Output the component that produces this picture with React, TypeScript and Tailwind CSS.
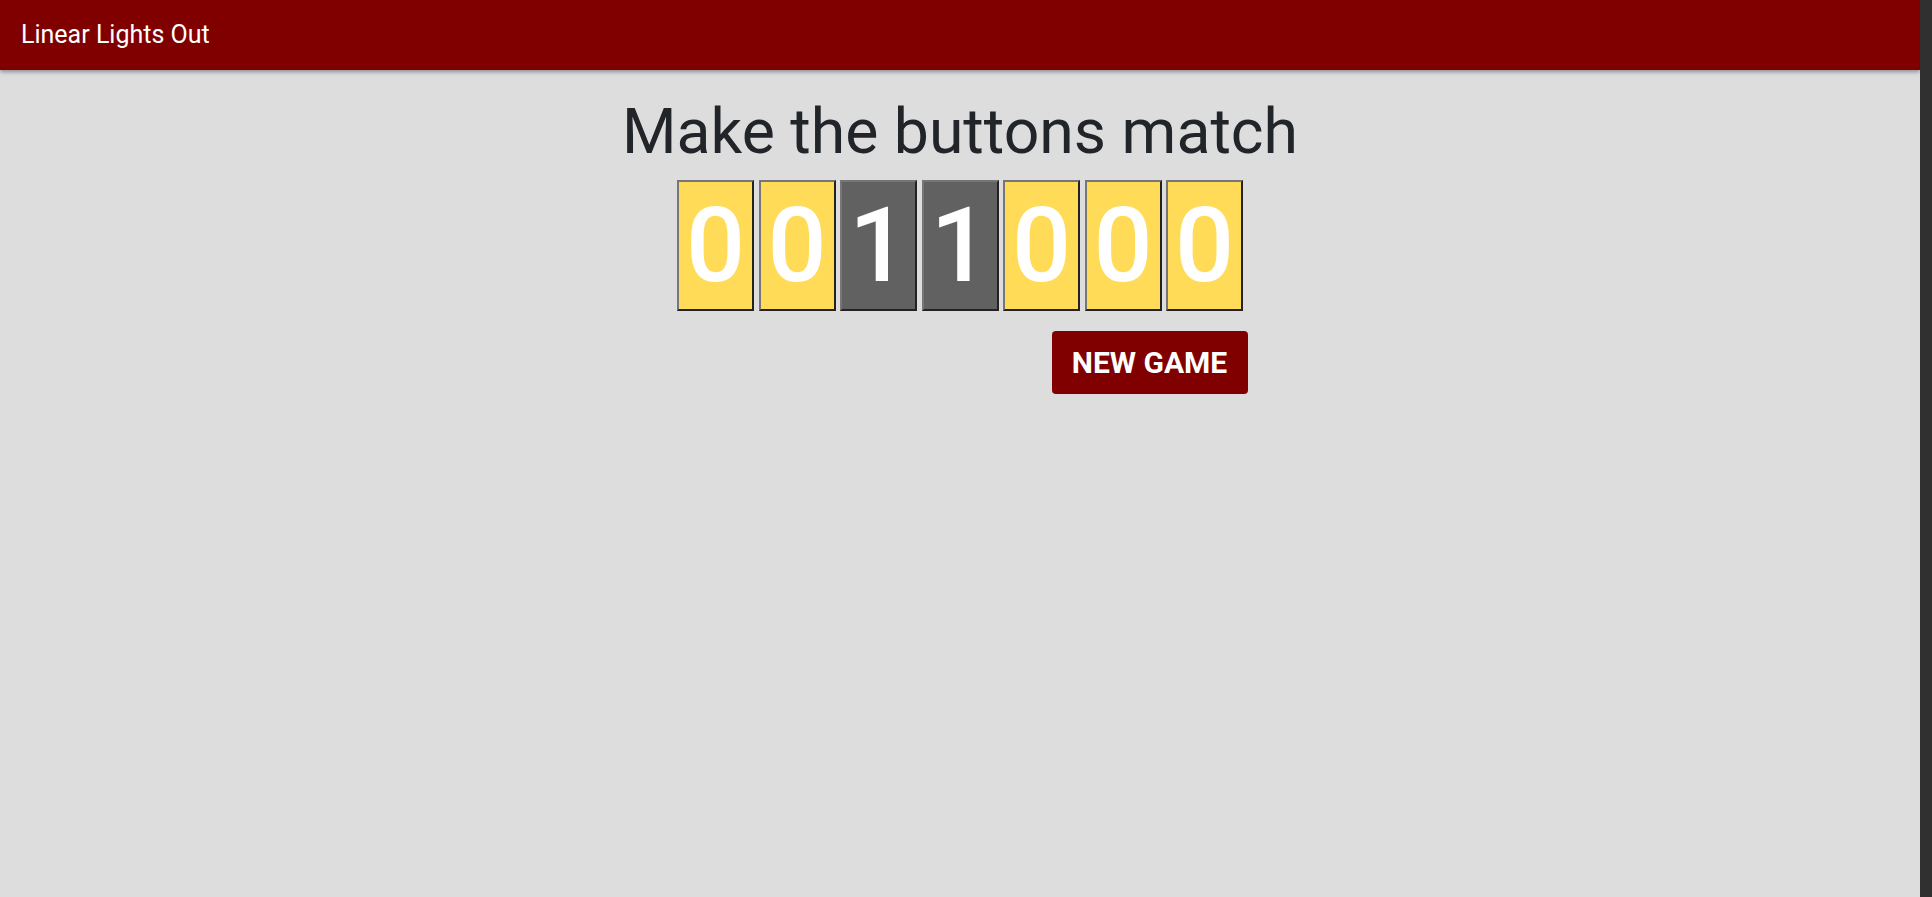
const lights = [0, 0, 1, 1, 0, 0, 0];

function Light({ on }: { on: boolean }) {
  return (
    <button
      className={`flex h-[131px] w-[77px] items-center justify-center border-2 border-t-[#767676] border-l-[#767676] border-b-[#222] border-r-[#222] text-[104px] font-medium leading-none text-white ${
        on ? "bg-[#616161]" : "bg-[#ffdb58]"
      }`}
    >
      {on ? "1" : "0"}
    </button>
  );
}

export default function App() {
  return (
    <div className="flex h-[897px] w-full bg-[#dddddd] font-['Roboto',sans-serif]">
      <div className="flex flex-1 flex-col">
        <header className="flex h-[70px] items-center bg-[#800000] px-[21px] shadow-[0_2px_4px_rgba(0,0,0,0.35)]">
          <span className="text-[25px] text-white">Linear Lights Out</span>
        </header>
        <main className="flex flex-col items-center pt-[24px]">
          <h1 className="text-[62.5px] font-normal leading-[1.2] text-[#212529]">Make the buttons match</h1>
          <div className="mt-[11px] flex gap-[4.5px]">
            {lights.map((l, i) => (
              <Light key={i} on={l === 1} />
            ))}
          </div>
          <div className="mt-[20px] flex w-[567px] justify-end">
            <button className="-mr-[4px] h-[63px] w-[196px] rounded-[4px] bg-[#800000] text-[30px] font-bold text-white">
              NEW GAME
            </button>
          </div>
        </main>
      </div>
      <div className="w-[12px] bg-[#303030]" />
    </div>
  );
}
